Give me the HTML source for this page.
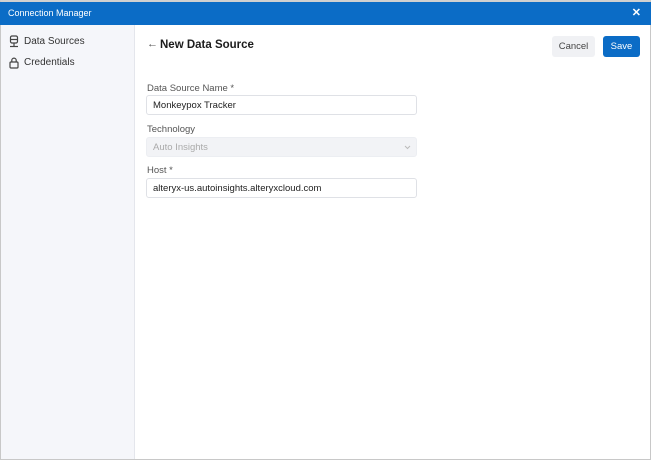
<!DOCTYPE html>
<html><head><style>
*{box-sizing:border-box;margin:0;padding:0}
body{width:652px;height:461px;overflow:hidden;background:#fff;font-family:"Liberation Sans",sans-serif;position:relative}
.frame{position:absolute;left:0;top:0;width:651px;height:460px;border:1px solid #c8c8c8;border-top:2px solid #d0d0d0}
.title{position:absolute;left:0;top:2px;width:651px;height:23px;background:#0b6cc6;color:#fff;font-size:9px;line-height:23px;padding-left:8px}
.x{position:absolute;right:10px;top:0;font-size:11px;font-weight:bold}
.side{position:absolute;left:1px;top:25px;width:134px;height:434px;background:#f5f6fa;border-right:1px solid #e4e6ec}
.nav{position:absolute;left:24px;font-size:10px;color:#333}
.ic{position:absolute;left:9px}
.h{position:absolute;left:160px;top:39px;font-size:11.5px;font-weight:bold;color:#1c1c1c}
.arr{position:absolute;left:147px;top:38px;font-size:11px;color:#555}
.lbl{position:absolute;left:147px;font-size:9.5px;color:#555}
.in{position:absolute;left:146px;width:271px;height:20px;border:1px solid #dfe1e6;border-radius:3px;font-size:9.5px;line-height:20px;padding-left:6px;color:#222}
.btn{position:absolute;top:36px;height:21px;border-radius:3px;font-size:9.5px;line-height:21px;text-align:center}
</style></head><body>
<div class="frame"></div>
<div class="title">Connection Manager<span class="x">✕</span></div>
<div class="side"></div>
<svg class="ic" style="top:35px" width="10" height="13" viewBox="0 0 10 13" fill="none" stroke="#444" stroke-width="1.2"><rect x="1.5" y="1" width="7" height="7" rx="1.5"/><line x1="1.5" y1="4.5" x2="8.5" y2="4.5"/><line x1="5" y1="8" x2="5" y2="11"/><line x1="1" y1="11.5" x2="9" y2="11.5"/></svg>
<div class="nav" style="top:36px">Data Sources</div>
<svg class="ic" style="top:57px" width="10" height="12" viewBox="0 0 10 12" fill="none" stroke="#444" stroke-width="1.2"><rect x="1" y="5" width="8" height="6" rx="1"/><path d="M2.8 5V3.3a2.2 2.2 0 0 1 4.4 0V5"/></svg>
<div class="nav" style="top:57px">Credentials</div>
<div class="arr">←</div>
<div class="h">New Data Source</div>
<div class="btn" style="left:552px;width:43px;background:#f0f1f4;color:#444">Cancel</div>
<div class="btn" style="left:603px;width:37px;background:#0b6cc6;color:#fff">Save</div>
<div class="lbl" style="top:83px">Data Source Name *</div>
<div class="in" style="top:95px;line-height:19px">Monkeypox Tracker</div>
<div class="lbl" style="top:124px">Technology</div>
<div class="in" style="top:137px;line-height:19px;background:#f2f3f6;border-color:#eceef2;color:#aaa">Auto Insights<svg style="position:absolute;right:5px;top:7px" width="7" height="5" viewBox="0 0 7 5" fill="none" stroke="#bbb" stroke-width="1"><path d="M1 1l2.5 2.5L6 1"/></svg></div>
<div class="lbl" style="top:165px">Host *</div>
<div class="in" style="top:178px;line-height:19px">alteryx-us.autoinsights.alteryxcloud.com</div>
</body></html>
